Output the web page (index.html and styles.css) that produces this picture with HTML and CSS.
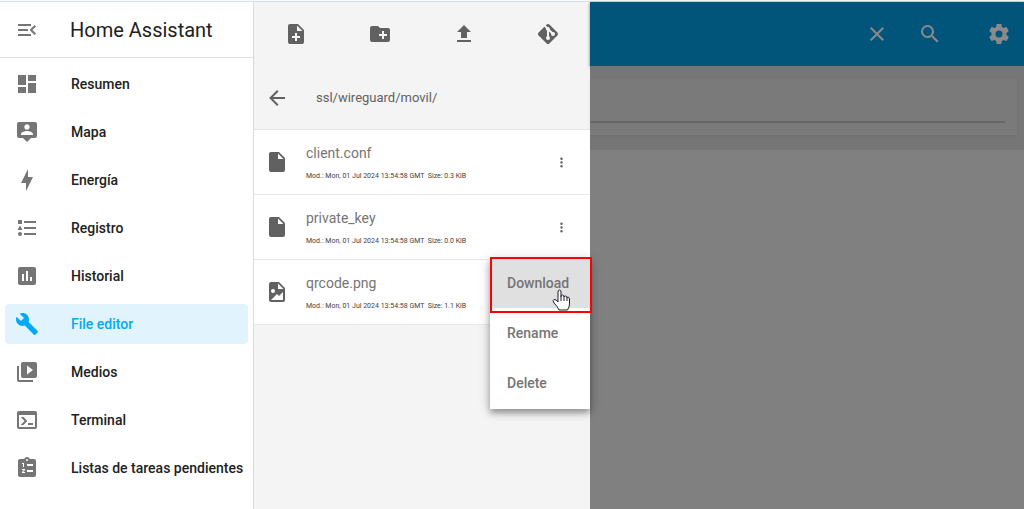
FILE: index.html
```html
<!DOCTYPE html>
<html lang="es">
<head>
    <meta charset="UTF-8">
    <meta name="viewport" content="width=device-width, initial-scale=1.0">
    <title>File editor - Home Assistant</title>
    <link rel="stylesheet" href="styles.css">
</head>
<body>
    <div class="app">
        <aside class="sidebar">
            <div class="sidebar-header">
                <button class="icon-btn" aria-label="Menu">
                    <svg class="icon" viewBox="0 0 24 24"><path d="M21,15.61L19.59,17L14.58,12L19.59,7L21,8.39L17.44,12L21,15.61M3,6H16V8H3V6M3,13V11H13V13H3M3,18V16H16V18H3Z"/></svg>
                </button>
                <h1 class="title">Home Assistant</h1>
            </div>
            <nav class="nav">
                <a href="#" class="nav-item">
                    <svg class="icon" viewBox="0 0 24 24"><path d="M13,3V9H21V3M13,21H21V11H13M3,21H11V15H3M3,13H11V3H3V13Z"/></svg>
                    <span>Resumen</span>
                </a>
                <a href="#" class="nav-item">
                    <svg class="icon" viewBox="0 0 24 24"><path d="M20,2H4A2,2 0 0,0 2,4V16A2,2 0 0,0 4,18H8L12,22L16,18H20A2,2 0 0,0 22,16V4A2,2 0 0,0 20,2M12,4.3C13.5,4.3 14.7,5.5 14.7,7C14.7,8.5 13.5,9.7 12,9.7C10.5,9.7 9.3,8.5 9.3,7C9.3,5.5 10.5,4.3 12,4.3M18,15H6V14.1C6,12.1 10,11 12,11C14,11 18,12.1 18,14.1V15Z"/></svg>
                    <span>Mapa</span>
                </a>
                <a href="#" class="nav-item">
                    <svg class="icon" viewBox="0 0 24 24"><path d="M11,15H6L13,1V9H18L11,23V15Z"/></svg>
                    <span>Energía</span>
                </a>
                <a href="#" class="nav-item">
                    <svg class="icon" viewBox="0 0 24 24"><path d="M5,9.5L7.5,14H2.5L5,9.5M3,4H7V8H3V4M5,20A2,2 0 0,0 7,18A2,2 0 0,0 5,16A2,2 0 0,0 3,18A2,2 0 0,0 5,20M9,5V7H21V5H9M9,19H21V17H9V19M9,13H21V11H9V13Z"/></svg>
                    <span>Registro</span>
                </a>
                <a href="#" class="nav-item">
                    <svg class="icon" viewBox="0 0 24 24"><path d="M17,17H15V13H17M13,17H11V7H13M9,17H7V10H9M19,3H5C3.89,3 3,3.89 3,5V19A2,2 0 0,0 5,21H19A2,2 0 0,0 21,19V5C21,3.89 20.1,3 19,3Z"/></svg>
                    <span>Historial</span>
                </a>
                <a href="#" class="nav-item active">
                    <svg class="icon" viewBox="0 0 24 24"><path d="M22.7,19L13.6,9.9C14.5,7.6 14,4.9 12.1,3C10.1,1 7.1,0.6 4.7,1.7L9,6L6,9L1.6,4.7C0.4,7.1 0.9,10.1 2.9,12.1C4.8,14 7.5,14.5 9.8,13.6L18.9,22.7C19.3,23.1 19.9,23.1 20.3,22.7L22.6,20.4C23.1,20 23.1,19.3 22.7,19Z"/></svg>
                    <span>File editor</span>
                </a>
                <a href="#" class="nav-item">
                    <svg class="icon" viewBox="0 0 24 24"><path d="M4,6H2V20A2,2 0 0,0 4,22H18V20H4V6M20,2H8A2,2 0 0,0 6,4V16A2,2 0 0,0 8,18H20A2,2 0 0,0 22,16V4A2,2 0 0,0 20,2M12,14.5V5.5L18,10L12,14.5Z"/></svg>
                    <span>Medios</span>
                </a>
                <a href="#" class="nav-item">
                    <svg class="icon" viewBox="0 0 24 24"><path d="M20,19V7H4V19H20M20,3A2,2 0 0,1 22,5V19A2,2 0 0,1 20,21H4A2,2 0 0,1 2,19V5C2,3.89 2.9,3 4,3H20M13,17V15H18V17H13M9.58,13L5.57,9H8.4L11.7,12.3C12.09,12.69 12.09,13.33 11.7,13.72L8.42,17H5.59L9.58,13Z"/></svg>
                    <span>Terminal</span>
                </a>
                <a href="#" class="nav-item">
                    <svg class="icon" viewBox="0 0 24 24"><path fill-rule="evenodd" d="M19,3H14.82C14.4,1.84 13.3,1 12,1C10.7,1 9.6,1.84 9.18,3H5A2,2 0 0,0 3,5V19A2,2 0 0,0 5,21H19A2,2 0 0,0 21,19V5A2,2 0 0,0 19,3M12,3A1,1 0 0,1 13,4A1,1 0 0,1 12,5A1,1 0 0,1 11,4A1,1 0 0,1 12,3M7,7H9V11H8V8H7V7M7,13H10V14.1L8.2,16H10V17H7V15.9L8.8,14H7V13M12,8H18V10H12V8M12,14H18V16H12V14Z"/></svg>
                    <span>Listas de tareas pendientes</span>
                </a>
            </nav>
        </aside>

        <section class="files">
            <div class="toolbar">
                <button class="icon-btn" aria-label="New file">
                    <svg class="icon" viewBox="0 0 24 24"><path fill-rule="evenodd" d="M14,2H6A2,2 0 0,0 4,4V20A2,2 0 0,0 6,22H18A2,2 0 0,0 20,20V8L14,2M13,9V3.5L18.5,9H13M11,11H13V14H16V16H13V19H11V16H8V14H11V11Z"/></svg>
                </button>
                <button class="icon-btn" aria-label="New folder">
                    <svg class="icon" viewBox="0 0 24 24"><path fill-rule="evenodd" d="M20,6H12L10,4H4A2,2 0 0,0 2,6V18A2,2 0 0,0 4,20H20A2,2 0 0,0 22,18V8A2,2 0 0,0 20,6M19,14H16V17H14V14H11V12H14V9H16V12H19V14Z"/></svg>
                </button>
                <button class="icon-btn" aria-label="Upload">
                    <svg class="icon" viewBox="0 0 24 24"><path d="M9,16V10H5L12,3L19,10H15V16H9M5,20V18H19V20H5Z"/></svg>
                </button>
                <button class="icon-btn" aria-label="Git">
                    <svg class="icon" viewBox="0 0 24 24"><path d="M2.6,10.59L8.38,4.8L10.07,6.5C9.83,7.35 10.22,8.28 11,8.73V14.27C10.4,14.61 10,15.26 10,16A2,2 0 0,0 12,18A2,2 0 0,0 14,16C14,15.26 13.6,14.61 13,14.27V9.41L15.07,11.5C15,11.65 15,11.82 15,12A2,2 0 0,0 17,14A2,2 0 0,0 19,12A2,2 0 0,0 17,10C16.82,10 16.65,10 16.5,10.07L13.93,7.5C14.19,6.57 13.71,5.55 12.78,5.16C12.35,5 11.9,4.96 11.5,5.07L9.8,3.38L10.59,2.6C11.37,1.81 12.63,1.81 13.41,2.6L21.4,10.59C22.19,11.37 22.19,12.63 21.4,13.41L13.41,21.4C12.63,22.19 11.37,22.19 10.59,21.4L2.6,13.41C1.81,12.63 1.81,11.37 2.6,10.59Z"/></svg>
                </button>
            </div>
            <div class="path">
                <button class="icon-btn" aria-label="Back">
                    <svg class="icon" viewBox="0 0 24 24"><path d="M20,11V13H8L13.5,18.5L12.08,19.92L4.16,12L12.08,4.08L13.5,5.5L8,11H20Z"/></svg>
                </button>
                <span>ssl/wireguard/movil/</span>
            </div>
            <ul class="file-list">
                <li class="file">
                    <svg class="icon" viewBox="0 0 24 24"><path d="M13,9V3.5L18.5,9M6,2C4.89,2 4,2.89 4,4V20A2,2 0 0,0 6,22H18A2,2 0 0,0 20,20V8L14,2H6Z"/></svg>
                    <div class="file-info">
                        <a href="#" class="file-name">client.conf</a>
                        <div class="file-meta">Mod.: Mon, 01 Jul 2024 13:54:58 GMT&nbsp; Size: 0.3 KiB</div>
                    </div>
                    <button class="icon-btn" aria-label="Options">
                        <svg class="dots" viewBox="0 0 24 24"><path d="M12,16A2,2 0 1,1 12,20A2,2 0 1,1 12,16M12,10A2,2 0 1,1 12,14A2,2 0 1,1 12,10M12,4A2,2 0 1,1 12,8A2,2 0 1,1 12,4Z"/></svg>
                    </button>
                </li>
                <li class="file">
                    <svg class="icon" viewBox="0 0 24 24"><path d="M13,9V3.5L18.5,9M6,2C4.89,2 4,2.89 4,4V20A2,2 0 0,0 6,22H18A2,2 0 0,0 20,20V8L14,2H6Z"/></svg>
                    <div class="file-info">
                        <a href="#" class="file-name">private_key</a>
                        <div class="file-meta">Mod.: Mon, 01 Jul 2024 13:54:58 GMT&nbsp; Size: 0.0 KiB</div>
                    </div>
                    <button class="icon-btn" aria-label="Options">
                        <svg class="dots" viewBox="0 0 24 24"><path d="M12,16A2,2 0 1,1 12,20A2,2 0 1,1 12,16M12,10A2,2 0 1,1 12,14A2,2 0 1,1 12,10M12,4A2,2 0 1,1 12,8A2,2 0 1,1 12,4Z"/></svg>
                    </button>
                </li>
                <li class="file">
                    <svg class="icon" viewBox="0 0 24 24"><path fill-rule="evenodd" d="M14,2L20,8V20A2,2 0 0,1 18,22H6A2,2 0 0,1 4,20V4A2,2 0 0,1 6,2H14M13,3.5V9H18.5L13,3.5M6,20H18V12L14,16L12,14L6,20M8,9A2,2 0 0,0 6,11A2,2 0 0,0 8,13A2,2 0 0,0 10,11A2,2 0 0,0 8,9Z"/></svg>
                    <div class="file-info">
                        <a href="#" class="file-name">qrcode.png</a>
                        <div class="file-meta">Mod.: Mon, 01 Jul 2024 13:54:58 GMT&nbsp; Size: 1.1 KiB</div>
                    </div>
                    <div class="menu">
                        <button class="menu-item selected">Download</button>
                        <button class="menu-item">Rename</button>
                        <button class="menu-item">Delete</button>
                        <div class="highlight"></div>
                        <svg class="cursor" viewBox="0 0 18 22"><path d="M6,12V3Q6,1 7.5,1T9,3V7.500Q9,6 10.500,6T12,8Q12,7 13.500,7T15,9Q15,8 16,8T17.500,10V15Q17.500,18 15.500,21H7Q6,18 2,14Q0,11 2,10.500Q4,10 6,13Z" fill="#fff" stroke="#1c1c2b"/><path d="M9,7V12M12,8V12M15,9V12" fill="none" stroke="#1c1c2b"/></svg>
                    </div>
                </li>
            </ul>
        </section>

        <main class="editor">
            <header class="editor-bar">
                <button class="icon-btn" aria-label="Close">
                    <svg class="icon" viewBox="0 0 24 24"><path d="M19,6.41L17.59,5L12,10.59L6.41,5L5,6.41L10.59,12L5,17.59L6.41,19L12,13.41L17.59,19L19,17.59L13.41,12L19,6.41Z"/></svg>
                </button>
                <button class="icon-btn" aria-label="Search">
                    <svg class="icon" viewBox="0 0 24 24"><path d="M9.5,3A6.5,6.5 0 0,1 16,9.5C16,11.11 15.41,12.59 14.44,13.73L14.71,14H15.5L20.5,19L19,20.5L14,15.5V14.71L13.73,14.44C12.59,15.41 11.11,16 9.5,16A6.5,6.5 0 0,1 3,9.5A6.5,6.5 0 0,1 9.5,3M9.5,5C7,5 5,7 5,9.5C5,12 7,14 9.5,14C12,14 14,12 14,9.5C14,7 12,5 9.5,5Z"/></svg>
                </button>
                <button class="icon-btn settings" aria-label="Settings">
                    <svg class="icon" viewBox="0 0 24 24"><path d="M12,15.5A3.5,3.5 0 0,1 8.5,12A3.5,3.5 0 0,1 12,8.5A3.5,3.5 0 0,1 15.5,12A3.5,3.5 0 0,1 12,15.5M19.43,12.97C19.47,12.65 19.5,12.33 19.5,12C19.5,11.67 19.47,11.34 19.43,11L21.54,9.37C21.73,9.22 21.78,8.95 21.66,8.73L19.66,5.27C19.54,5.05 19.27,4.96 19.05,5.05L16.56,6.05C16.04,5.66 15.5,5.32 14.87,5.07L14.5,2.42C14.46,2.18 14.25,2 14,2H10C9.75,2 9.54,2.18 9.5,2.42L9.13,5.07C8.5,5.32 7.96,5.66 7.44,6.05L4.95,5.05C4.73,4.96 4.46,5.05 4.34,5.27L2.34,8.73C2.21,8.95 2.27,9.22 2.46,9.37L4.57,11C4.53,11.34 4.5,11.67 4.5,12C4.5,12.33 4.53,12.65 4.57,12.97L2.46,14.63C2.27,14.78 2.21,15.05 2.34,15.27L4.34,18.73C4.46,18.95 4.73,19.03 4.95,18.95L7.44,17.94C7.96,18.34 8.5,18.68 9.13,18.93L9.5,21.58C9.54,21.82 9.75,22 10,22H14C14.25,22 14.46,21.82 14.5,21.58L14.87,18.93C15.5,18.67 16.04,18.34 16.56,17.94L19.05,18.95C19.27,19.03 19.54,18.95 19.66,18.73L21.66,15.27C21.78,15.05 21.73,14.78 21.54,14.63L19.43,12.97Z"/></svg>
                </button>
            </header>
            <div class="editor-top">
                <div class="card">
                    <input class="filename" type="text" aria-label="File name">
                </div>
            </div>
        </main>
    </div>
</body>
</html>
```
FILE: styles.css
```css
* {
    box-sizing: border-box;
}
body {
    margin: 0;
    padding-top: 1px;
    background-color: #f8fafb;
    font-family: Roboto, sans-serif;
    color: #212121;
}
.app {
    display: flex;
    min-height: calc(100vh - 1px);
    border-top: 1px solid #d5e2e8;
}
.icon {
    display: block;
    flex: none;
    width: 24px;
    height: 24px;
    fill: currentColor;
}
.icon-btn {
    display: flex;
    align-items: center;
    justify-content: center;
    padding: 0;
    border: none;
    background: none;
    color: inherit;
    cursor: pointer;
}

/* Sidebar */
.sidebar {
    flex: none;
    width: 254px;
    border-right: 1px solid #dcdcdc;
    background-color: #fff;
}
.sidebar-header {
    display: flex;
    align-items: center;
    gap: 31px;
    height: 56px;
    padding: 0 15px;
    border-bottom: 1px solid #e0e0e0;
}
.sidebar-header .icon-btn,
.nav-item .icon {
    color: #757575;
}
.title {
    margin: 0;
    font-size: 20px;
    font-weight: 400;
}
.nav {
    display: flex;
    flex-direction: column;
    gap: 8px;
    padding: 6px 5px;
}
.nav-item {
    display: flex;
    align-items: center;
    gap: 32px;
    height: 40px;
    padding-left: 10px;
    border-radius: 4px;
    font-size: 14px;
    font-weight: 500;
    color: #212121;
    text-decoration: none;
    white-space: nowrap;
}
.nav-item.active {
    background-color: #e1f4fe;
}
.nav-item.active,
.nav-item.active .icon {
    color: #03a9f4;
}

/* File browser */
.files {
    flex: none;
    width: 336px;
    background-color: #f4f4f4;
    color: #616161;
}
.toolbar {
    display: grid;
    grid-template-columns: repeat(4, 1fr);
    height: 64px;
}
.path {
    display: flex;
    align-items: center;
    gap: 27px;
    height: 64px;
    padding: 0 11px;
    border-bottom: 1px solid #e4e4e4;
    font-size: 13px;
}
.file-list {
    margin: 0;
    padding: 0;
    list-style: none;
}
.file {
    position: relative;
    display: flex;
    align-items: center;
    gap: 17px;
    height: 65px;
    padding: 0 17px 0 11px;
    border-bottom: 1px solid #e8e8e8;
    background-color: #fff;
}
.file-info {
    flex: 1;
}
.file-name {
    display: block;
    font-size: 14px;
    line-height: 20px;
    color: #757575;
    text-decoration: none;
}
.file-meta {
    padding-top: 7px;
    font-size: 7px;
    line-height: 12px;
    color: #424242;
}
.file .icon-btn {
    width: 24px;
    height: 24px;
}
.dots {
    width: 15px;
    height: 15px;
    fill: currentColor;
}
.menu {
    position: absolute;
    top: -2px;
    right: 0;
    width: 100px;
    padding-bottom: 1px;
    background-color: #fff;
    box-shadow: 0 4px 6px rgba(0, 0, 0, 0.3), 0 2px 12px rgba(0, 0, 0, 0.2);
}
.menu-item {
    display: block;
    width: 100%;
    height: 50px;
    padding: 0 17px;
    border: none;
    background: none;
    font-family: inherit;
    font-size: 14px;
    font-weight: 500;
    text-align: left;
    color: #757575;
    cursor: pointer;
}
.menu-item.selected {
    background-color: #e0e0e0;
}
.highlight {
    position: absolute;
    top: -1px;
    left: 0;
    right: -2px;
    height: 56px;
    border: 2px solid #f00;
    pointer-events: none;
}
.cursor {
    position: absolute;
    top: 31px;
    right: 20px;
    width: 18px;
    height: 22px;
}

/* Editor, dimmed behind the file browser */
.editor {
    flex: 1;
    min-width: 0;
    background-color: #808080;
}
.editor-bar {
    display: flex;
    align-items: center;
    justify-content: flex-end;
    gap: 29px;
    height: 64px;
    padding: 0 13px;
    background-color: #01547a;
    box-shadow: 0 1px 3px rgba(0, 0, 0, 0.5);
    color: #8a8a8a;
}
.settings {
    margin-left: 16px;
}
.editor-top {
    padding: 12px 7px 15px 0;
    background-color: #767676;
}
.card {
    padding: 0 12px 12px 0;
    background-color: #7a7a7a;
    box-shadow: 0 1px 3px rgba(0, 0, 0, 0.08);
}
.filename {
    display: block;
    width: 100%;
    height: 45px;
    border: none;
    border-bottom: 2px solid #666;
    background: none;
    outline: none;
}
```
